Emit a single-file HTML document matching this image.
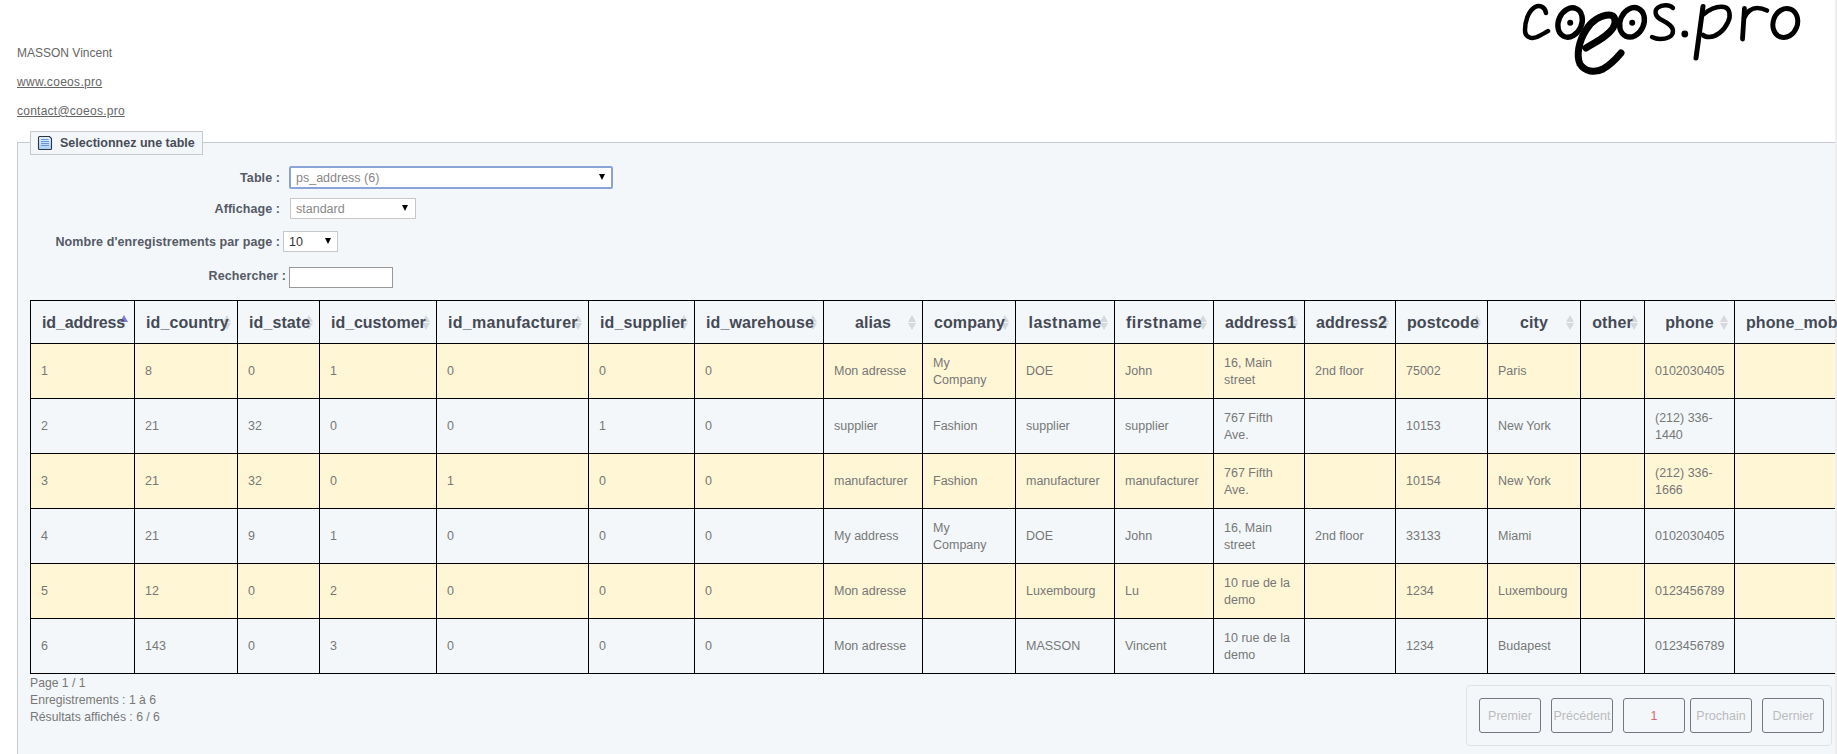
<!DOCTYPE html>
<html><head><meta charset="utf-8">
<style>
html,body{margin:0;padding:0;}
body{width:1837px;height:754px;overflow:hidden;position:relative;background:#fff;font-family:"Liberation Sans",sans-serif;color:#666;}
.abs{position:absolute;}
.fs{position:absolute;left:17px;top:142px;width:1830px;height:700px;background:#f3f7fa;border:1px solid #c6c9ce;box-sizing:border-box;}
.legend{position:absolute;left:30px;top:131px;width:173px;height:24px;box-sizing:border-box;border:1px solid #c6c9ce;background:#f3f7fa;}
.legend b{position:absolute;left:29px;top:4px;font-size:12.5px;color:#484c58;white-space:nowrap;}
.lbl{position:absolute;font-weight:bold;font-size:12.5px;letter-spacing:0.08px;color:#555a66;white-space:nowrap;text-align:right;}
.sel{position:absolute;background:#fff;border:1px solid #c8c8c8;box-sizing:border-box;font-size:12.5px;color:#888;white-space:nowrap;}
.sel span{position:absolute;left:5px;}
.sel i{position:absolute;width:0;height:0;border-left:3.5px solid transparent;border-right:3.5px solid transparent;border-top:6px solid #000;}
.th{position:absolute;background:#f3f7fa;}
.th span{z-index:2;position:absolute;left:11px;right:11px;top:13px;letter-spacing:0.1px;text-align:center;font-weight:bold;font-size:16px;color:#454a55;white-space:nowrap;}
.td{position:absolute;}
.td span{position:absolute;left:10px;top:50%;transform:translateY(-50%);font-size:12.5px;line-height:17px;color:#777;white-space:nowrap;}
.ln{position:absolute;background:#000;}
.su,.sd,.sa{position:absolute;right:6px;width:0;height:0;border-left:4px solid transparent;border-right:4px solid transparent;}
.su{top:14px;border-bottom:7px solid #d6d8dc;}
.sd{top:22px;border-top:7px solid #d6d8dc;}
.sa{top:14px;border-bottom:7px solid #7b7bd6;}
.foot{position:absolute;left:30px;font-size:12.2px;color:#777;white-space:nowrap;}
.pag{position:absolute;left:1466px;top:685px;width:366px;height:61px;box-sizing:border-box;border:1px solid #dfe3e8;border-radius:4px;}
.btn{position:absolute;top:698px;width:62px;height:35px;box-sizing:border-box;border:1px solid #75787e;border-radius:3px;font-size:12.5px;color:#bbb;text-align:center;line-height:35px;white-space:nowrap;}
a{color:#666;text-decoration:underline;}
</style></head><body>
<div class="abs" style="left:17px;top:46px;font-size:12px;color:#666;">MASSON Vincent</div>
<div class="abs" style="left:17px;top:75px;font-size:12px;letter-spacing:0.3px;"><a>www.coeos.pro</a></div>
<div class="abs" style="left:17px;top:104px;font-size:12px;letter-spacing:0.25px;"><a>contact@coeos.pro</a></div>
<div class="fs"></div>
<div class="legend"><b>Selectionnez une table</b></div>
<svg class="abs" style="left:37px;top:135px" width="17" height="17" viewBox="0 0 17 17">
<defs><linearGradient id="ig" x1="0" y1="0" x2="0" y2="1"><stop offset="0" stop-color="#e2eefc"/><stop offset="1" stop-color="#a9cff7"/></linearGradient></defs>
<path d="M2.5,1.5 H12.5 L14.5,3.5 V13.5 Q14.5,14.5 13.5,14.5 H2.5 Q1.5,14.5 1.5,13.5 V2.5 Q1.5,1.5 2.5,1.5 Z" fill="url(#ig)" stroke="#2f3642" stroke-width="1.1"/>
<path d="M4,4.5 H11.5 M4,6.5 H12 M4,8.5 H12 M4,10.5 H12" stroke="#5f8fcf" stroke-width="0.9"/>
</svg>
<svg class="abs" style="left:0;top:0" width="1837" height="80" viewBox="0 0 1837 80" fill="none" stroke="#000" stroke-linecap="round" stroke-linejoin="round">
<path d="M1546,13 C1545,6 1539,5 1535,7 C1528,11 1525,22 1525,30 C1525,38 1532,39 1537,37 C1541,35 1545,33 1548,31" stroke-width="4.5"/>
<ellipse cx="1570.1" cy="22.5" rx="11.6" ry="15.2" transform="rotate(24 1570.1 22.5)" stroke-width="5.4"/>
<circle cx="1570.2" cy="22.8" r="3" fill="#000" stroke="none"/>
<ellipse cx="1632" cy="22.3" rx="11.8" ry="15.2" transform="rotate(24 1632 22.3)" stroke-width="5.4"/>
<circle cx="1632.2" cy="22.8" r="3" fill="#000" stroke="none"/>
<path d="M1586,48 C1596,42 1608,36 1613,28 C1617,21 1615,15 1609,15 C1601,15 1591,21 1586,30 C1579,41 1576,55 1580,64 C1585,72 1595,73 1603,69 C1610,65 1616,59 1621,53" stroke-width="7"/>
<path d="M1673,8 C1670,4.5 1662,4.5 1658,7.5 C1654,10.5 1655,16 1660,19 C1666,22.5 1673,25 1673,31 C1673,37 1666,39 1660,39 C1656,39 1654,38 1652,37" stroke-width="4.4"/>
<circle cx="1684.8" cy="34" r="3.4" fill="#000" stroke="none"/>
<path d="M1703,6.5 L1696,58" stroke-width="5"/>
<path d="M1704,14 C1710,9 1718,6 1724,7 C1730,8 1731,16 1728,22 C1724,31 1716,37 1709,37 C1706,37 1704,36 1703,35" stroke-width="4.6"/>
<path d="M1744.5,8.5 L1742.5,39" stroke-width="4.8"/>
<path d="M1744,18 C1747,12 1752,8 1757,8 C1761,8 1764,9 1767,10.5" stroke-width="4.6"/>
<ellipse cx="1785.3" cy="23" rx="12.1" ry="14.8" transform="rotate(20 1785.3 23)" stroke-width="5"/>
</svg>

<div class="lbl" style="right:1557px;top:171px;">Table :</div>
<div class="sel" style="left:289px;top:166px;width:324px;height:23px;border:2px solid #8aa4d9;border-radius:2px;"><span style="top:3px">ps_address (6)</span><i style="left:308px;top:6px"></i></div>
<div class="lbl" style="right:1557px;top:202px;">Affichage :</div>
<div class="sel" style="left:290px;top:198px;width:126px;height:21px;"><span style="top:3px">standard</span><i style="left:111px;top:6px"></i></div>
<div class="lbl" style="right:1557px;top:235px;">Nombre d'enregistrements par page :</div>
<div class="sel" style="left:283px;top:231px;width:55px;height:21px;color:#333;"><span style="top:3px">10</span><i style="left:41px;top:6px"></i></div>
<div class="lbl" style="right:1551px;top:269px;">Rechercher :</div>
<div class="sel" style="left:289px;top:267px;width:104px;height:21px;border-color:#999;"></div>
<div class="th" style="left:31px;top:301px;width:103px;height:42px"><span style="letter-spacing:-0.15px">id_address</span><i class="sa"></i></div>
<div class="th" style="left:135px;top:301px;width:102px;height:42px"><span>id_country</span><i class="su"></i><i class="sd"></i></div>
<div class="th" style="left:238px;top:301px;width:81px;height:42px"><span>id_state</span><i class="su"></i><i class="sd"></i></div>
<div class="th" style="left:320px;top:301px;width:116px;height:42px"><span style="letter-spacing:-0.04px">id_customer</span><i class="su"></i><i class="sd"></i></div>
<div class="th" style="left:437px;top:301px;width:151px;height:42px"><span style="letter-spacing:0.3px">id_manufacturer</span><i class="su"></i><i class="sd"></i></div>
<div class="th" style="left:589px;top:301px;width:105px;height:42px"><span>id_supplier</span><i class="su"></i><i class="sd"></i></div>
<div class="th" style="left:695px;top:301px;width:128px;height:42px"><span>id_warehouse</span><i class="su"></i><i class="sd"></i></div>
<div class="th" style="left:824px;top:301px;width:98px;height:42px"><span>alias</span><i class="su"></i><i class="sd"></i></div>
<div class="th" style="left:923px;top:301px;width:92px;height:42px"><span>company</span><i class="su"></i><i class="sd"></i></div>
<div class="th" style="left:1016px;top:301px;width:98px;height:42px"><span style="letter-spacing:0.45px">lastname</span><i class="su"></i><i class="sd"></i></div>
<div class="th" style="left:1115px;top:301px;width:98px;height:42px"><span style="letter-spacing:0.45px">firstname</span><i class="su"></i><i class="sd"></i></div>
<div class="th" style="left:1214px;top:301px;width:90px;height:42px"><span>address1</span><i class="su"></i><i class="sd"></i></div>
<div class="th" style="left:1305px;top:301px;width:90px;height:42px"><span>address2</span><i class="su"></i><i class="sd"></i></div>
<div class="th" style="left:1396px;top:301px;width:91px;height:42px"><span>postcode</span><i class="su"></i><i class="sd"></i></div>
<div class="th" style="left:1488px;top:301px;width:92px;height:42px"><span>city</span><i class="su"></i><i class="sd"></i></div>
<div class="th" style="left:1581px;top:301px;width:63px;height:42px"><span>other</span><i class="su"></i><i class="sd"></i></div>
<div class="th" style="left:1645px;top:301px;width:89px;height:42px"><span>phone</span><i class="su"></i><i class="sd"></i></div>
<div class="th" style="left:1735px;top:301px;width:165px;height:42px"><span style="text-align:left">phone_mobile</span><i class="su"></i><i class="sd"></i></div>
<div class="td" style="left:31px;top:344px;width:103px;height:54px;background:#fff6d6"><span>1</span></div>
<div class="td" style="left:135px;top:344px;width:102px;height:54px;background:#fff6d6"><span>8</span></div>
<div class="td" style="left:238px;top:344px;width:81px;height:54px;background:#fff6d6"><span>0</span></div>
<div class="td" style="left:320px;top:344px;width:116px;height:54px;background:#fff6d6"><span>1</span></div>
<div class="td" style="left:437px;top:344px;width:151px;height:54px;background:#fff6d6"><span>0</span></div>
<div class="td" style="left:589px;top:344px;width:105px;height:54px;background:#fff6d6"><span>0</span></div>
<div class="td" style="left:695px;top:344px;width:128px;height:54px;background:#fff6d6"><span>0</span></div>
<div class="td" style="left:824px;top:344px;width:98px;height:54px;background:#fff6d6"><span>Mon adresse</span></div>
<div class="td" style="left:923px;top:344px;width:92px;height:54px;background:#fff6d6"><span style="margin-top:1px">My<br>Company</span></div>
<div class="td" style="left:1016px;top:344px;width:98px;height:54px;background:#fff6d6"><span>DOE</span></div>
<div class="td" style="left:1115px;top:344px;width:98px;height:54px;background:#fff6d6"><span>John</span></div>
<div class="td" style="left:1214px;top:344px;width:90px;height:54px;background:#fff6d6"><span style="margin-top:1px">16, Main<br>street</span></div>
<div class="td" style="left:1305px;top:344px;width:90px;height:54px;background:#fff6d6"><span>2nd floor</span></div>
<div class="td" style="left:1396px;top:344px;width:91px;height:54px;background:#fff6d6"><span>75002</span></div>
<div class="td" style="left:1488px;top:344px;width:92px;height:54px;background:#fff6d6"><span>Paris</span></div>
<div class="td" style="left:1581px;top:344px;width:63px;height:54px;background:#fff6d6"><span></span></div>
<div class="td" style="left:1645px;top:344px;width:89px;height:54px;background:#fff6d6"><span>0102030405</span></div>
<div class="td" style="left:1735px;top:344px;width:165px;height:54px;background:#fff6d6"><span></span></div>
<div class="td" style="left:31px;top:399px;width:103px;height:54px;background:#f3f7fa"><span>2</span></div>
<div class="td" style="left:135px;top:399px;width:102px;height:54px;background:#f3f7fa"><span>21</span></div>
<div class="td" style="left:238px;top:399px;width:81px;height:54px;background:#f3f7fa"><span>32</span></div>
<div class="td" style="left:320px;top:399px;width:116px;height:54px;background:#f3f7fa"><span>0</span></div>
<div class="td" style="left:437px;top:399px;width:151px;height:54px;background:#f3f7fa"><span>0</span></div>
<div class="td" style="left:589px;top:399px;width:105px;height:54px;background:#f3f7fa"><span>1</span></div>
<div class="td" style="left:695px;top:399px;width:128px;height:54px;background:#f3f7fa"><span>0</span></div>
<div class="td" style="left:824px;top:399px;width:98px;height:54px;background:#f3f7fa"><span>supplier</span></div>
<div class="td" style="left:923px;top:399px;width:92px;height:54px;background:#f3f7fa"><span>Fashion</span></div>
<div class="td" style="left:1016px;top:399px;width:98px;height:54px;background:#f3f7fa"><span>supplier</span></div>
<div class="td" style="left:1115px;top:399px;width:98px;height:54px;background:#f3f7fa"><span>supplier</span></div>
<div class="td" style="left:1214px;top:399px;width:90px;height:54px;background:#f3f7fa"><span style="margin-top:1px">767 Fifth<br>Ave.</span></div>
<div class="td" style="left:1305px;top:399px;width:90px;height:54px;background:#f3f7fa"><span></span></div>
<div class="td" style="left:1396px;top:399px;width:91px;height:54px;background:#f3f7fa"><span>10153</span></div>
<div class="td" style="left:1488px;top:399px;width:92px;height:54px;background:#f3f7fa"><span>New York</span></div>
<div class="td" style="left:1581px;top:399px;width:63px;height:54px;background:#f3f7fa"><span></span></div>
<div class="td" style="left:1645px;top:399px;width:89px;height:54px;background:#f3f7fa"><span style="margin-top:1px">(212) 336-<br>1440</span></div>
<div class="td" style="left:1735px;top:399px;width:165px;height:54px;background:#f3f7fa"><span></span></div>
<div class="td" style="left:31px;top:454px;width:103px;height:54px;background:#fff6d6"><span>3</span></div>
<div class="td" style="left:135px;top:454px;width:102px;height:54px;background:#fff6d6"><span>21</span></div>
<div class="td" style="left:238px;top:454px;width:81px;height:54px;background:#fff6d6"><span>32</span></div>
<div class="td" style="left:320px;top:454px;width:116px;height:54px;background:#fff6d6"><span>0</span></div>
<div class="td" style="left:437px;top:454px;width:151px;height:54px;background:#fff6d6"><span>1</span></div>
<div class="td" style="left:589px;top:454px;width:105px;height:54px;background:#fff6d6"><span>0</span></div>
<div class="td" style="left:695px;top:454px;width:128px;height:54px;background:#fff6d6"><span>0</span></div>
<div class="td" style="left:824px;top:454px;width:98px;height:54px;background:#fff6d6"><span>manufacturer</span></div>
<div class="td" style="left:923px;top:454px;width:92px;height:54px;background:#fff6d6"><span>Fashion</span></div>
<div class="td" style="left:1016px;top:454px;width:98px;height:54px;background:#fff6d6"><span>manufacturer</span></div>
<div class="td" style="left:1115px;top:454px;width:98px;height:54px;background:#fff6d6"><span>manufacturer</span></div>
<div class="td" style="left:1214px;top:454px;width:90px;height:54px;background:#fff6d6"><span style="margin-top:1px">767 Fifth<br>Ave.</span></div>
<div class="td" style="left:1305px;top:454px;width:90px;height:54px;background:#fff6d6"><span></span></div>
<div class="td" style="left:1396px;top:454px;width:91px;height:54px;background:#fff6d6"><span>10154</span></div>
<div class="td" style="left:1488px;top:454px;width:92px;height:54px;background:#fff6d6"><span>New York</span></div>
<div class="td" style="left:1581px;top:454px;width:63px;height:54px;background:#fff6d6"><span></span></div>
<div class="td" style="left:1645px;top:454px;width:89px;height:54px;background:#fff6d6"><span style="margin-top:1px">(212) 336-<br>1666</span></div>
<div class="td" style="left:1735px;top:454px;width:165px;height:54px;background:#fff6d6"><span></span></div>
<div class="td" style="left:31px;top:509px;width:103px;height:54px;background:#f3f7fa"><span>4</span></div>
<div class="td" style="left:135px;top:509px;width:102px;height:54px;background:#f3f7fa"><span>21</span></div>
<div class="td" style="left:238px;top:509px;width:81px;height:54px;background:#f3f7fa"><span>9</span></div>
<div class="td" style="left:320px;top:509px;width:116px;height:54px;background:#f3f7fa"><span>1</span></div>
<div class="td" style="left:437px;top:509px;width:151px;height:54px;background:#f3f7fa"><span>0</span></div>
<div class="td" style="left:589px;top:509px;width:105px;height:54px;background:#f3f7fa"><span>0</span></div>
<div class="td" style="left:695px;top:509px;width:128px;height:54px;background:#f3f7fa"><span>0</span></div>
<div class="td" style="left:824px;top:509px;width:98px;height:54px;background:#f3f7fa"><span>My address</span></div>
<div class="td" style="left:923px;top:509px;width:92px;height:54px;background:#f3f7fa"><span style="margin-top:1px">My<br>Company</span></div>
<div class="td" style="left:1016px;top:509px;width:98px;height:54px;background:#f3f7fa"><span>DOE</span></div>
<div class="td" style="left:1115px;top:509px;width:98px;height:54px;background:#f3f7fa"><span>John</span></div>
<div class="td" style="left:1214px;top:509px;width:90px;height:54px;background:#f3f7fa"><span style="margin-top:1px">16, Main<br>street</span></div>
<div class="td" style="left:1305px;top:509px;width:90px;height:54px;background:#f3f7fa"><span>2nd floor</span></div>
<div class="td" style="left:1396px;top:509px;width:91px;height:54px;background:#f3f7fa"><span>33133</span></div>
<div class="td" style="left:1488px;top:509px;width:92px;height:54px;background:#f3f7fa"><span>Miami</span></div>
<div class="td" style="left:1581px;top:509px;width:63px;height:54px;background:#f3f7fa"><span></span></div>
<div class="td" style="left:1645px;top:509px;width:89px;height:54px;background:#f3f7fa"><span>0102030405</span></div>
<div class="td" style="left:1735px;top:509px;width:165px;height:54px;background:#f3f7fa"><span></span></div>
<div class="td" style="left:31px;top:564px;width:103px;height:54px;background:#fff6d6"><span>5</span></div>
<div class="td" style="left:135px;top:564px;width:102px;height:54px;background:#fff6d6"><span>12</span></div>
<div class="td" style="left:238px;top:564px;width:81px;height:54px;background:#fff6d6"><span>0</span></div>
<div class="td" style="left:320px;top:564px;width:116px;height:54px;background:#fff6d6"><span>2</span></div>
<div class="td" style="left:437px;top:564px;width:151px;height:54px;background:#fff6d6"><span>0</span></div>
<div class="td" style="left:589px;top:564px;width:105px;height:54px;background:#fff6d6"><span>0</span></div>
<div class="td" style="left:695px;top:564px;width:128px;height:54px;background:#fff6d6"><span>0</span></div>
<div class="td" style="left:824px;top:564px;width:98px;height:54px;background:#fff6d6"><span>Mon adresse</span></div>
<div class="td" style="left:923px;top:564px;width:92px;height:54px;background:#fff6d6"><span></span></div>
<div class="td" style="left:1016px;top:564px;width:98px;height:54px;background:#fff6d6"><span>Luxembourg</span></div>
<div class="td" style="left:1115px;top:564px;width:98px;height:54px;background:#fff6d6"><span>Lu</span></div>
<div class="td" style="left:1214px;top:564px;width:90px;height:54px;background:#fff6d6"><span style="margin-top:1px">10 rue de la<br>demo</span></div>
<div class="td" style="left:1305px;top:564px;width:90px;height:54px;background:#fff6d6"><span></span></div>
<div class="td" style="left:1396px;top:564px;width:91px;height:54px;background:#fff6d6"><span>1234</span></div>
<div class="td" style="left:1488px;top:564px;width:92px;height:54px;background:#fff6d6"><span>Luxembourg</span></div>
<div class="td" style="left:1581px;top:564px;width:63px;height:54px;background:#fff6d6"><span></span></div>
<div class="td" style="left:1645px;top:564px;width:89px;height:54px;background:#fff6d6"><span>0123456789</span></div>
<div class="td" style="left:1735px;top:564px;width:165px;height:54px;background:#fff6d6"><span></span></div>
<div class="td" style="left:31px;top:619px;width:103px;height:54px;background:#f3f7fa"><span>6</span></div>
<div class="td" style="left:135px;top:619px;width:102px;height:54px;background:#f3f7fa"><span>143</span></div>
<div class="td" style="left:238px;top:619px;width:81px;height:54px;background:#f3f7fa"><span>0</span></div>
<div class="td" style="left:320px;top:619px;width:116px;height:54px;background:#f3f7fa"><span>3</span></div>
<div class="td" style="left:437px;top:619px;width:151px;height:54px;background:#f3f7fa"><span>0</span></div>
<div class="td" style="left:589px;top:619px;width:105px;height:54px;background:#f3f7fa"><span>0</span></div>
<div class="td" style="left:695px;top:619px;width:128px;height:54px;background:#f3f7fa"><span>0</span></div>
<div class="td" style="left:824px;top:619px;width:98px;height:54px;background:#f3f7fa"><span>Mon adresse</span></div>
<div class="td" style="left:923px;top:619px;width:92px;height:54px;background:#f3f7fa"><span></span></div>
<div class="td" style="left:1016px;top:619px;width:98px;height:54px;background:#f3f7fa"><span>MASSON</span></div>
<div class="td" style="left:1115px;top:619px;width:98px;height:54px;background:#f3f7fa"><span>Vincent</span></div>
<div class="td" style="left:1214px;top:619px;width:90px;height:54px;background:#f3f7fa"><span style="margin-top:1px">10 rue de la<br>demo</span></div>
<div class="td" style="left:1305px;top:619px;width:90px;height:54px;background:#f3f7fa"><span></span></div>
<div class="td" style="left:1396px;top:619px;width:91px;height:54px;background:#f3f7fa"><span>1234</span></div>
<div class="td" style="left:1488px;top:619px;width:92px;height:54px;background:#f3f7fa"><span>Budapest</span></div>
<div class="td" style="left:1581px;top:619px;width:63px;height:54px;background:#f3f7fa"><span></span></div>
<div class="td" style="left:1645px;top:619px;width:89px;height:54px;background:#f3f7fa"><span>0123456789</span></div>
<div class="td" style="left:1735px;top:619px;width:165px;height:54px;background:#f3f7fa"><span></span></div>
<div class="ln" style="left:30px;top:300px;width:1px;height:374px"></div>
<div class="ln" style="left:134px;top:300px;width:1px;height:374px"></div>
<div class="ln" style="left:237px;top:300px;width:1px;height:374px"></div>
<div class="ln" style="left:319px;top:300px;width:1px;height:374px"></div>
<div class="ln" style="left:436px;top:300px;width:1px;height:374px"></div>
<div class="ln" style="left:588px;top:300px;width:1px;height:374px"></div>
<div class="ln" style="left:694px;top:300px;width:1px;height:374px"></div>
<div class="ln" style="left:823px;top:300px;width:1px;height:374px"></div>
<div class="ln" style="left:922px;top:300px;width:1px;height:374px"></div>
<div class="ln" style="left:1015px;top:300px;width:1px;height:374px"></div>
<div class="ln" style="left:1114px;top:300px;width:1px;height:374px"></div>
<div class="ln" style="left:1213px;top:300px;width:1px;height:374px"></div>
<div class="ln" style="left:1304px;top:300px;width:1px;height:374px"></div>
<div class="ln" style="left:1395px;top:300px;width:1px;height:374px"></div>
<div class="ln" style="left:1487px;top:300px;width:1px;height:374px"></div>
<div class="ln" style="left:1580px;top:300px;width:1px;height:374px"></div>
<div class="ln" style="left:1644px;top:300px;width:1px;height:374px"></div>
<div class="ln" style="left:1734px;top:300px;width:1px;height:374px"></div>
<div class="ln" style="left:30px;top:300px;width:1805px;height:1px"></div>
<div class="ln" style="left:30px;top:343px;width:1805px;height:1px"></div>
<div class="ln" style="left:30px;top:398px;width:1805px;height:1px"></div>
<div class="ln" style="left:30px;top:453px;width:1805px;height:1px"></div>
<div class="ln" style="left:30px;top:508px;width:1805px;height:1px"></div>
<div class="ln" style="left:30px;top:563px;width:1805px;height:1px"></div>
<div class="ln" style="left:30px;top:618px;width:1805px;height:1px"></div>
<div class="ln" style="left:30px;top:673px;width:1805px;height:1px"></div>
<div class="foot" style="top:676px">Page 1 / 1</div>
<div class="foot" style="top:693px">Enregistrements : 1 à 6</div>
<div class="foot" style="top:710px">Résultats affichés : 6 / 6</div>
<div class="pag"></div>
<div class="btn" style="left:1479px">Premier</div>
<div class="btn" style="left:1551px">Précédent</div>
<div class="btn" style="left:1623px;color:#db6874;">1</div>
<div class="btn" style="left:1690px">Prochain</div>
<div class="btn" style="left:1762px">Dernier</div>
<div class="abs" style="left:1835px;top:0;width:2px;height:754px;background:#eee"></div>
</body></html>
